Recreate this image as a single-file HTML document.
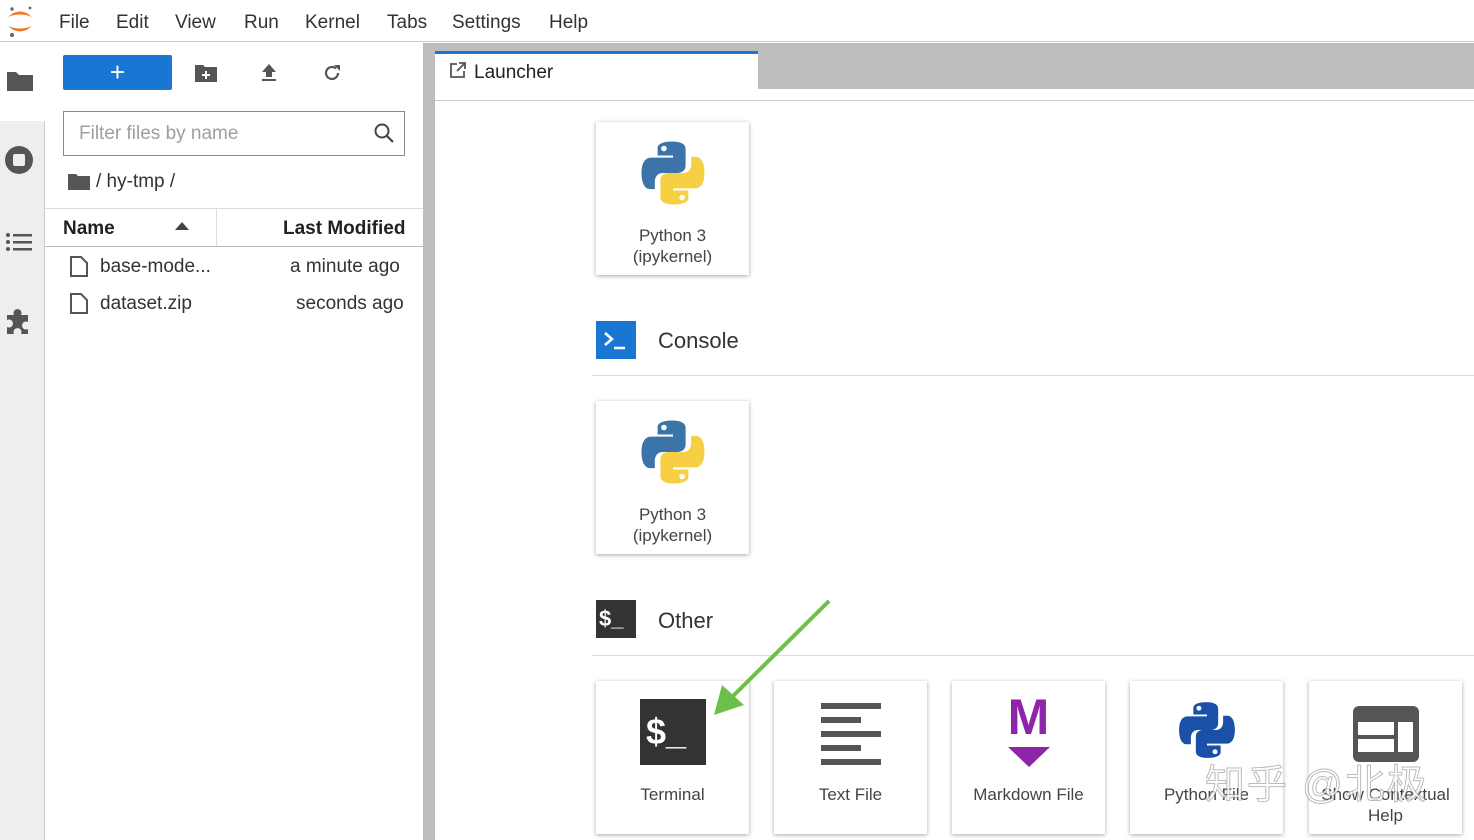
<!DOCTYPE html>
<html><head><meta charset="utf-8"><style>
*{box-sizing:border-box;margin:0;padding:0}
body{width:1474px;height:840px;overflow:hidden;background:#fff;font-family:"Liberation Sans","Noto Sans CJK SC",sans-serif;color:#212121;position:relative}
.a{position:absolute}
.menu span{position:absolute;top:12px;font-size:19px;color:#333}
.card{position:absolute;width:153px;height:153px;background:#fff;box-shadow:0 1px 4px rgba(0,0,0,.35);text-align:center;font-size:17px;color:#444;line-height:21px}
.card .lbl{position:absolute;left:0;right:0;top:103px}
.hdr{position:absolute;font-size:22px;color:#333}
.hline{position:absolute;left:592px;right:0;height:1px;background:#ddd}
</style></head><body>
<svg width="0" height="0" style="position:absolute"><defs>
<g id="py"><path fill="#3b74a8" d="M49 5c-23 0-21 10-21 10v10h22v3H19S5 26 5 50s12 23 12 23h7V62s0-12 12-12h21s11 0 11-11V16S70 5 49 5z"/><path fill="#f7cf44" transform="rotate(180 50 50)" d="M49 5c-23 0-21 10-21 10v10h22v3H19S5 26 5 50s12 23 12 23h7V62s0-12 12-12h21s11 0 11-11V16S70 5 49 5z"/><circle cx="37" cy="15" r="4" fill="#fff"/><circle cx="63" cy="85" r="4" fill="#fff"/></g>
</defs></svg>
<!-- menu -->
<div class="a menu" style="left:0;top:0;width:1474px;height:42px;border-bottom:1px solid #ccc;background:#fff">
<svg class="a" style="left:5px;top:4px" width="30" height="34" viewBox="0 0 30 34"><path d="M3 13 Q15 2 27 13 Q15 8 3 13z" fill="#f37726"/><path d="M3 22 Q15 33 27 22 Q15 27 3 22z" fill="#f37726"/><circle cx="7" cy="5" r="1.7" fill="#666"/><circle cx="25" cy="4" r="1.4" fill="#666"/><circle cx="7" cy="31" r="2" fill="#666"/></svg>
<span style="left:59px">File</span><span style="left:116px">Edit</span><span style="left:175px">View</span><span style="left:244px">Run</span><span style="left:305px">Kernel</span><span style="left:387px">Tabs</span><span style="left:452px">Settings</span><span style="left:549px">Help</span>
</div>
<!-- left sidebar -->
<div class="a" style="left:0;top:43px;width:45px;height:797px;background:#eee;border-right:1px solid #ccc"></div>
<div class="a" style="left:0;top:43px;width:45px;height:78px;background:#fff"></div>
<svg class="a" style="left:6px;top:70px" width="28" height="22" viewBox="0 0 28 22"><path d="M1 2h9l3 3h14v16H1z" fill="#555"/></svg>
<svg class="a" style="left:4px;top:145px" width="30" height="30" viewBox="0 0 30 30"><circle cx="15" cy="15" r="14" fill="#555"/><rect x="9" y="9" width="12" height="12" rx="2" fill="#eee"/></svg>
<svg class="a" style="left:6px;top:232px" width="26" height="20" viewBox="0 0 26 20" fill="#555"><circle cx="2" cy="3" r="2"/><circle cx="2" cy="10" r="2"/><circle cx="2" cy="17" r="2"/><rect x="7" y="2" width="19" height="2.5"/><rect x="7" y="9" width="19" height="2.5"/><rect x="7" y="16" width="19" height="2.5"/></svg>
<svg class="a" style="left:5px;top:307px" width="28" height="28" viewBox="0 0 28 28"><path d="M2 8h7a4 4 0 1 1 7 0h7v7a4 4 0 1 0 0 7v5H16a4 4 0 1 0-7 0H2v-7a4 4 0 1 0 0-7z" fill="#555"/></svg>
<!-- file panel -->
<div class="a" style="left:63px;top:55px;width:109px;height:35px;background:#1976d2;border-radius:2px;color:#fff;font-size:26px;text-align:center;line-height:34px">+</div>
<svg class="a" style="left:195px;top:64px" width="22" height="18" viewBox="0 0 22 18"><path d="M0 1h8l2 2h12v15H0z" fill="#555"/><path d="M11 7v8M7 11h8" stroke="#fff" stroke-width="2"/></svg>
<svg class="a" style="left:259px;top:63px" width="20" height="20" viewBox="0 0 20 20" fill="#555"><path d="M10 1l7 8h-4v5H7V9H3z"/><rect x="3" y="16" width="14" height="2"/></svg>
<svg class="a" style="left:322px;top:63px" width="20" height="20" viewBox="0 0 20 20"><path d="M16 10a6 6 0 1 1-2-4.5" fill="none" stroke="#555" stroke-width="2.2"/><path d="M12 2h6v6z" fill="#555"/></svg>
<div class="a" style="left:63px;top:111px;width:342px;height:45px;border:1.5px solid #888;background:#fff"></div>
<div class="a" style="left:79px;top:123px;font-size:19px;color:#9e9e9e">Filter files by name</div>
<svg class="a" style="left:373px;top:122px" width="22" height="22" viewBox="0 0 22 22"><circle cx="9" cy="9" r="6.5" fill="none" stroke="#444" stroke-width="2"/><path d="M14 14l6 6" stroke="#444" stroke-width="2.2"/></svg>
<svg class="a" style="left:68px;top:173px" width="22" height="17" viewBox="0 0 22 17"><path d="M0 1h8l2 2h12v14H0z" fill="#555"/></svg>
<div class="a" style="left:96px;top:171px;font-size:19px;color:#333">/ hy-tmp /</div>
<div class="a" style="left:45px;top:208px;width:378px;height:39px;border-top:1px solid #ddd;border-bottom:1px solid #bbb"></div>
<div class="a" style="left:216px;top:209px;width:1px;height:37px;background:#ddd"></div>
<div class="a" style="left:63px;top:218px;font-size:19px;font-weight:bold;color:#222">Name</div>
<div class="a" style="left:283px;top:218px;font-size:19px;font-weight:bold;color:#222">Last Modified</div>
<svg class="a" style="left:175px;top:222px" width="14" height="8"><path d="M0 8L7 0l7 8z" fill="#444"/></svg>
<svg class="a" style="left:69px;top:256px" width="20" height="21" viewBox="0 0 20 21"><path d="M2 1h10l6 6v13H2z" fill="none" stroke="#555" stroke-width="2"/></svg>
<svg class="a" style="left:69px;top:293px" width="20" height="21" viewBox="0 0 20 21"><path d="M2 1h10l6 6v13H2z" fill="none" stroke="#555" stroke-width="2"/></svg>
<div class="a" style="left:100px;top:256px;font-size:19px;color:#333">base-mode...</div>
<div class="a" style="left:290px;top:256px;font-size:19px;color:#333">a minute ago</div>
<div class="a" style="left:100px;top:293px;font-size:19px;color:#333">dataset.zip</div>
<div class="a" style="left:296px;top:293px;font-size:19px;color:#333">seconds ago</div>
<!-- splitter -->
<div class="a" style="left:423px;top:43px;width:12px;height:797px;background:#bdbdbd"></div>
<!-- tab bar -->
<div class="a" style="left:435px;top:43px;width:1039px;height:46px;background:#bdbdbd"></div>
<div class="a" style="left:435px;top:51px;width:323px;height:38px;background:#fff;border-top:3px solid #1976d2"></div>
<svg class="a" style="left:450px;top:62px" width="16" height="16" viewBox="0 0 16 16"><path d="M7 2H1v13h13V9" fill="none" stroke="#555" stroke-width="1.8"/><path d="M9 1h6v6M15 1L7 9" fill="none" stroke="#555" stroke-width="1.8"/></svg>
<div class="a" style="left:474px;top:62px;font-size:19px;color:#222">Launcher</div>
<div class="a" style="left:435px;top:100px;width:1039px;height:1px;background:#ccc"></div>
<!-- cards -->
<div class="card" style="left:596px;top:122px"><svg class="a" style="left:42px;top:16px" width="70" height="70" viewBox="0 0 100 100"><use href="#py"/></svg><div class="lbl">Python 3<br>(ipykernel)</div></div>
<div class="a" style="left:596px;top:321px;width:40px;height:38px;background:#1976d2"><svg width="40" height="38"><path d="M9 12l7 6-7 6" fill="none" stroke="#fff" stroke-width="2.5"/><path d="M18 27h11" stroke="#fff" stroke-width="2.5"/></svg></div>
<div class="hdr" style="left:658px;top:328px">Console</div>
<div class="hline" style="top:375px"></div>
<div class="card" style="left:596px;top:401px"><svg class="a" style="left:42px;top:16px" width="70" height="70" viewBox="0 0 100 100"><use href="#py"/></svg><div class="lbl">Python 3<br>(ipykernel)</div></div>
<div class="a" style="left:596px;top:600px;width:40px;height:38px;background:#333;color:#fff;font-size:22px;font-weight:bold;line-height:38px;padding-left:3px">$_</div>
<div class="hdr" style="left:658px;top:608px">Other</div>
<div class="hline" style="top:655px"></div>
<div class="card" style="left:596px;top:681px"><div class="a" style="left:44px;top:18px;width:66px;height:66px;background:#333;color:#fff;font-size:36px;font-weight:bold;line-height:66px;text-align:left;padding-left:6px">$_</div><div class="lbl">Terminal</div></div>
<div class="card" style="left:774px;top:681px"><svg class="a" style="left:47px;top:22px" width="60" height="62" fill="#555"><rect y="0" width="60" height="6"/><rect y="14" width="40" height="6"/><rect y="28" width="60" height="6"/><rect y="42" width="40" height="6"/><rect y="56" width="60" height="6"/></svg><div class="lbl">Text File</div></div>
<div class="card" style="left:952px;top:681px"><div class="a" style="left:0;right:0;top:8px;font-size:50px;font-weight:bold;color:#8e24aa;line-height:56px">M</div><svg class="a" style="left:56px;top:66px" width="42" height="20"><path d="M0 0h42L21 20z" fill="#8e24aa"/></svg><div class="lbl">Markdown File</div></div>
<div class="card" style="left:1130px;top:681px"><svg class="a" style="left:46px;top:18px" width="62" height="62" viewBox="0 0 100 100"><path fill="#1a50a8" d="M49 5c-23 0-21 10-21 10v10h22v3H19S5 26 5 50s12 23 12 23h7V62s0-12 12-12h21s11 0 11-11V16S70 5 49 5z"/><path fill="#1a50a8" transform="rotate(180 50 50)" d="M49 5c-23 0-21 10-21 10v10h22v3H19S5 26 5 50s12 23 12 23h7V62s0-12 12-12h21s11 0 11-11V16S70 5 49 5z"/><circle cx="37" cy="15" r="4" fill="#fff"/><circle cx="63" cy="85" r="4" fill="#fff"/></svg><div class="lbl">Python File</div></div>
<div class="card" style="left:1309px;top:681px"><svg class="a" style="left:44px;top:25px" width="66" height="56" viewBox="0 0 66 56"><rect x="0" y="0" width="66" height="56" rx="6" fill="#555"/><rect x="5" y="16" width="36" height="13" fill="#fff"/><rect x="5" y="33" width="36" height="13" fill="#fff"/><rect x="45" y="16" width="15" height="30" fill="#fff"/></svg><div class="lbl">Show Contextual<br>Help</div></div>
<!-- arrow -->
<svg class="a" style="left:700px;top:595px" width="140" height="130"><path d="M129 6L26 108" stroke="#6cc04a" stroke-width="4"/><path d="M14 120l8-30 22 20z" fill="#6cc04a"/></svg>
<!-- watermark -->
<div class="a" style="left:1205px;top:752px;font-size:40px;color:rgba(255,255,255,.75);-webkit-text-stroke:1px rgba(120,120,120,.5);letter-spacing:2px">知乎 @北极</div>
</body></html>
